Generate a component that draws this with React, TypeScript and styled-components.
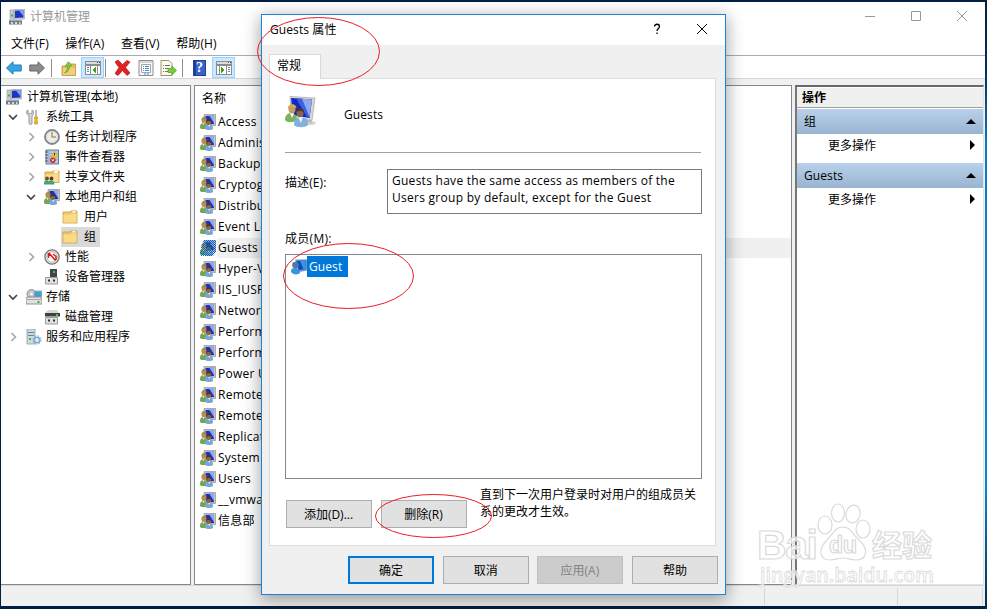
import React from 'react';
import styled, { createGlobalStyle, css } from 'styled-components';

const GlobalStyle = createGlobalStyle`
   html, body {
      margin: 0;
      height: 100%;
      overflow: hidden;
   }

   * {
      box-sizing: border-box;
   }
`;

const Desktop = styled.div`
   position: relative;
   width: 987px;
   height: 609px;
   padding: 2px 2px 3px 1px;
   background: linear-gradient(180deg, #021f43 0%, #02305f 12%, #0a7cc4 24%, #0b86cf 80%, #01284d 100%) right / 2px 100%
         no-repeat,
      #011f42;
   font-family: 'Open Sans', 'Noto Sans CJK SC', sans-serif;
   font-size: 12px;
   color: #000;
   overflow: hidden;
   white-space: nowrap;
`;

/* Main window */

const Window = styled.div`
   display: flex;
   flex-direction: column;
   width: 984px;
   height: 604px;
   background: #f0f0f0;
`;

const TitleBar = styled.div`
   display: flex;
   align-items: center;
   height: 30px;
   padding-left: 8px;
   background: #fff;
   color: #999;
`;

const TitleText = styled.span`
   flex: 1;
   margin-left: 5px;
   line-height: 29px;
   height: 30px;
`;

const CaptionButtons = styled.div`
   display: flex;
   gap: 34px;
   padding-right: 17px;
   margin-top: -2px;
`;

const MenuBar = styled.div`
   display: flex;
   gap: 16.5px;
   height: 24px;
   padding: 1px 0 0 10px;
   background: #fff;
   border-bottom: 1px solid #a9acb2;
   line-height: 22px;
   letter-spacing: 0.1px;
`;

const Toolbar = styled.div`
   display: flex;
   align-items: center;
   height: 23px;
   padding: 1px 0 0 4px;
   background: #fff;
   border-bottom: 1px solid #d7d7d7;
`;

const ToolButton = styled.span<{ $active?: boolean; $gap?: number }>`
   display: flex;
   align-items: center;
   justify-content: center;
   width: 23px;
   height: 21px;
   margin-left: ${({ $gap }) => $gap ?? 0}px;

   ${({ $active }) =>
      $active &&
      css`
         background: #cce8ff;
         border: 1px solid #99d1ff;
      `}
`;

const ToolSeparator = styled.span<{ $gap: number }>`
   width: 1px;
   height: 18px;
   margin-left: ${({ $gap }) => $gap}px;
   background: #8d8d8d;
`;

const Panes = styled.div`
   display: flex;
   flex: 1;
   padding-top: 6px;
`;

const Pane = styled.div<{ $width: number; $gap?: number }>`
   width: ${({ $width }) => $width}px;
   margin-right: ${({ $gap }) => $gap ?? 0}px;
   background: #fff;
   border: 1px solid #828790;
`;

const TreePane = styled(Pane)`
   padding-top: 1px;
   border-left: 0;
`;

const TreeRow = styled.div<{ $level: number }>`
   display: flex;
   align-items: center;
   height: 20px;
   padding-left: ${({ $level }) => [4, 7, 25, 43][$level]}px;
`;

const Expander = styled.span`
   display: flex;
   align-items: center;
   width: 17px;
`;

const TreeItem = styled.span<{ $selected?: boolean; $gap: number }>`
   display: flex;
   align-items: center;
   height: 20px;
   line-height: 20px;
   padding: 0 4px 0 1px;
   gap: ${({ $gap }) => $gap}px;
   background: ${({ $selected }) => ($selected ? '#d9d9d9' : 'transparent')};
`;

const ListHeader = styled.div`
   height: 25px;
   padding-left: 7px;
   line-height: 25px;
`;

const GroupRow = styled.div<{ $selected?: boolean }>`
   display: flex;
   align-items: center;
   height: 21px;
   margin-left: 5px;
   gap: 1px;

   > span {
      flex: 1;
      height: 20px;
      padding-left: 1px;
      line-height: 20px;
      letter-spacing: 0.25px;
      background: ${({ $selected }) => ($selected ? '#f0f0f0' : 'transparent')};
   }
`;

const ActionPane = styled.div`
   flex: 1;
   margin-right: 1px;
   padding-top: 1px;
   background: #fff;
   border: 2px solid #696969;
   border-left-color: #777;
   border-right: 1px solid #e3e3e3;
   border-bottom: 1px solid #e3e3e3;
`;

const ActionTitle = styled.div`
   height: 20px;
   padding-left: 5px;
   background: #f0f0f0;
   border-bottom: 1px solid #a0a0a0;
   font-weight: bold;
   line-height: 20px;
`;

const ActionSection = styled.div`
   display: flex;
   align-items: center;
   justify-content: space-between;
   height: 25px;
   margin-top: 1px;
   padding: 0 7px;
   background: linear-gradient(#b9d1ea, #99b4d1);
   line-height: 22px;
   letter-spacing: 0.1px;
`;

const ActionItem = styled.div`
   display: flex;
   align-items: center;
   justify-content: space-between;
   height: 28px;
   padding: 0 8px 6px 31px;
`;

const StatusBar = styled.div`
   display: flex;
   height: 21px;
   padding: 2px 2px 1px 0;
   border-top: 1px solid #d7d7d7;
`;

const StatusCell = styled.span<{ $width: number }>`
   width: ${({ $width }) => $width}px;
   border-right: 1px solid #d7d7d7;
`;

/* Dialog */

const Dialog = styled.div`
   position: absolute;
   left: 261px;
   top: 14px;
   display: flex;
   flex-direction: column;
   width: 465px;
   height: 581px;
   background: #f0f0f0;
   border: 1px solid #1883d7;
   box-shadow: 0 4px 16px 1px rgba(0, 0, 0, 0.36);
`;

const DialogTitle = styled.div`
   display: flex;
   align-items: center;
   height: 30px;
   padding: 0 17px 2px 8px;
   background: #fff;

   > span {
      flex: 1;
      letter-spacing: 0.1px;
   }

   > svg {
      margin-left: 34px;
   }
`;

const Tabs = styled.div`
   display: flex;
   height: 34px;
   padding: 9px 0 0 7px;
`;

const Tab = styled.div`
   position: relative;
   z-index: 1;
   width: 52px;
   height: 25px;
   padding-left: 7px;
   background: #fff;
   border: 1px solid #d9d9d9;
   border-bottom: 0;
   line-height: 22px;
`;

const TabPage = styled.div`
   width: 447px;
   height: 468px;
   margin: -1px 0 0 7px;
   padding: 17px 13px 0 15px;
   background: #fff;
   border: 1px solid #dcdcdc;
`;

const GroupSummary = styled.div`
   display: flex;
   align-items: center;
   width: 416px;
   height: 57px;
   padding-bottom: 24px;
   border-bottom: 1px solid #a0a0a0;
   gap: 27px;
   letter-spacing: 0.1px;

   > span {
      padding-top: 5px;
   }
`;

const Field = styled.div`
   display: flex;
   align-items: flex-start;
   justify-content: space-between;
   width: 417px;
   margin-top: 16px;
`;

const Label = styled.span`
   margin-top: 5px;
   line-height: 17px;
   letter-spacing: 0.1px;
`;

const Description = styled.div`
   width: 315px;
   height: 45px;
   padding: 2px 4px;
   border: 1px solid #7a7a7a;
   line-height: 17px;
   letter-spacing: 0.27px;
   white-space: pre;
`;

const MembersLabel = styled.div`
   height: 40px;
   padding-top: 16px;
   line-height: 17px;
   letter-spacing: 0.3px;
`;

const MemberList = styled.div`
   width: 417px;
   height: 225px;
   padding: 1px 5px;
   border: 1px solid #828790;
`;

const Member = styled.div`
   display: flex;
   align-items: center;
   height: 21px;

   > span {
      width: 41px;
      height: 21px;
      padding-left: 2px;
      background: #0078d7;
      color: #fff;
      line-height: 21px;
      letter-spacing: 0.1px;
   }
`;

const MemberActions = styled.div`
   display: flex;
   margin: 7px 0 0 1px;
   gap: 9px;
`;

const Note = styled.div`
   margin-left: 4px;
   line-height: 17px;
`;

const Button = styled.button<{ $primary?: boolean }>`
   width: 86px;
   height: 28px;
   padding: 0 0 1px;
   border: ${({ $primary }) => ($primary ? '2px solid #0078d7' : '1px solid #adadad')};
   background: #e1e1e1;
   color: #000;
   font: inherit;

   ${MemberActions} & {
      margin-top: 14px;
      padding-right: 1px;
   }

   &:disabled {
      padding-right: 1px;
      background: #ccc;
      border-color: #bfbfbf;
      color: #838383;
   }
`;

const DialogFooter = styled.div`
   display: flex;
   justify-content: flex-end;
   gap: 8.67px;
   padding: 10px 7px 0 0;
`;

const Overlay = styled.svg`
   position: absolute;
   z-index: 2;
   left: 0;
   top: 0;
   pointer-events: none;
`;

/* Icons */

const ComputerIcon = () => (
   <svg width="16" height="16" viewBox="0 0 16 16">
      <path d="M5 .5L15.500 0v10L5 10.500z" fill="#c9ccd0" stroke="#9a9ea3" strokeWidth=".6" />
      <path d="M6 1.800l8.500-.5v7.200L6 9z" fill="#1b35c4" />
      <path d="M10 1.500l4.500-.2v6z" fill="#7ea9f5" />
      <path d="M1 1h3.800v9.500H1z" fill="#c7cbd0" stroke="#8b9096" strokeWidth=".6" />
      <path d="M2 5.500h2v2H2z" fill="#38b72c" />
      <path d="M0 11h13v4.500H0z" fill="#6e7d88" />
      <path d="M0 10.500h13v1H0zM2 13h2v2H2zM6 13h2v2H6zM10 13h1.500v2H10z" fill="#d4dade" />
   </svg>
);

const GroupIcon = ({ tint }: { tint?: string }) => (
   <svg width="16" height="16" viewBox="0 0 16 16">
      <path d="M4 .5L15.500.3v11.200L8 12H4z" fill="#c4c4bf" stroke="#8f938f" strokeWidth=".7" />
      <path d="M5.500 2l8.500-.3V10l-7 .5-1.500-3z" fill="#1733cf" />
      <path d="M9.500 1.900l4.500-.2V9z" fill="#8ea9f2" />
      <path d="M0 13.500C0 10 1.500 9 3.500 9S7 10 7 13.500L6 15H1z" fill="#6fa753" />
      <path d="M2.500 9h2l-1 2z" fill="#fff" />
      <ellipse cx="4" cy="6.300" rx="2.500" ry="3" fill="#b98e58" />
      <path d="M1.500 6C1.500 2 6.500 2 6.500 6 5 4.500 3.500 4.500 1.500 6z" fill="#a98842" />
      <path d="M5 15c0-4 2-4.500 4-4.500s4 .5 4 4.500c-2 1.300-6 1.300-8 0z" fill="#79a6d3" />
      <path d="M8 10.500h2.500L9.300 13z" fill="#f2f7fc" />
      <ellipse cx="8.700" cy="8" rx="2.400" ry="2.900" fill="#8e6542" />
      <path d="M6.200 8c-.5-4.500 5.300-4.500 5 0-1.500-1.500-3.500-1.500-5 0z" fill="#463429" />
      {tint && (
         <>
            <defs>
               <pattern id="dither" width="2" height="2" patternUnits="userSpaceOnUse">
                  <path d="M0 0h1v1H0zM1 1h1v1H1z" fill={tint} shapeRendering="crispEdges" />
               </pattern>
            </defs>
            <path d="M4 0h12v12l-3 4H1l-1-4 2-8z" fill="url(#dither)" />
         </>
      )}
   </svg>
);

const LargeGroupIcon = () => (
   <svg width="32" height="32" viewBox="0 0 32 32">
      <ellipse cx="25" cy="27" rx="6" ry="2" fill="#d3d5d6" />
      <path d="M21 22l5 1 1 4-6-1z" fill="#b8bab9" />
      <path d="M5 .5l25 1.500-3 22.500L7 22z" fill="#d7d7d4" stroke="#aeb1af" strokeWidth=".8" />
      <path d="M6 2l21 1.500L24.500 22 8 19z" fill="#1228be" />
      <path d="M11 2.300l16 1.200L24.500 22l-2-.2z" fill="#3e62df" />
      <path d="M17 2.800l10 .7L24.500 21z" fill="#8ea9ef" />
      <path d="M0 24c0-5 3-7 6-7s6 2 6 7c-3 3-10 3-12 0z" fill="#7db35d" />
      <path d="M5 17h4l-2 5z" fill="#fff" />
      <ellipse cx="7" cy="13" rx="3.500" ry="4.600" fill="#c79a68" />
      <path d="M3 13c-1-6 8.500-6.500 8.500-1-3-.5-5-2-7 0z" fill="#cdb04c" />
      <path d="M9 29c0-6 3-8 7-8s7 2 7 8c-3 3-11 3-14 0z" fill="#80b1de" />
      <path d="M13 21h5l-2 6z" fill="#edf5fc" />
      <ellipse cx="15" cy="17" rx="3.500" ry="4.300" fill="#906442" />
      <path d="M11 16c0-5.500 8-5.500 8 0-3-1.500-5-1.500-8 0z" fill="#49372d" />
   </svg>
);

const UserIcon = () => (
   <svg width="16" height="16" viewBox="0 0 16 16">
      <path d="M4 .5h12v11L8 13z" fill="#6697c7" />
      <path d="M5.500 2L14.500 1.500v8.500l-7 1z" fill="#0a4cc4" />
      <path d="M9 1.800l5.500-.3v8.500l-2 .3z" fill="#4291df" />
      <circle cx="4.500" cy="6" r="3.300" fill="#4b7aa8" />
      <path d="M0 13c0-4 2-4 4-4 3 0 5 2 5 5-2 2-7 2-9-1z" fill="#3b93dc" />
   </svg>
);

const ToolsIcon = () => (
   <svg width="16" height="16" viewBox="0 0 16 16">
      <path
         d="M2 1v3l2 1 2-1V1c2 1 2 4 0 6v7c0 2-3 2-3 0V7C0 5 0 2 2 1z"
         fill="#d8d8d8"
         stroke="#818181"
         strokeWidth=".8"
      />
      <path d="M9.500 1h1v7h-1z" fill="#777" />
      <path d="M8.500 8h3v2l-1 1 1 1v3h-3v-3l1-1-1-1z" fill="#f5b321" stroke="#ca850d" strokeWidth=".6" />
   </svg>
);

const ClockIcon = () => (
   <svg width="16" height="16" viewBox="0 0 16 16">
      <circle cx="8" cy="8" r="7" fill="#e9edf4" stroke="#858585" strokeWidth="1.800" />
      <circle cx="8" cy="8" r="5.500" fill="none" stroke="#d5d9df" />
      <path d="M8 3v5h4" fill="none" stroke="#c29745" strokeWidth="1.500" />
   </svg>
);

const EventIcon = () => (
   <svg width="16" height="16" viewBox="0 0 16 16">
      <path d="M2 1h12.500v14H2z" fill="#b5c9e3" stroke="#41618d" strokeWidth=".8" />
      <path d="M4.500 2h.8v12h-.8zM6 4h8v.6H6zM6 7h8v.6H6zM6 10h8v.6H6z" fill="#7f9fc8" />
      <path d="M1 3h3M1 6h3M1 9h3M1 12h3" stroke="#444" strokeWidth=".8" />
      <path d="M10.500 2l3.500 6H7z" fill="#ffd21e" stroke="#c79a10" strokeWidth=".5" />
      <path d="M10.500 4v2.500" stroke="#222" />
      <circle cx="8.800" cy="11.300" r="2.800" fill="#d8272f" />
      <path d="M7.800 10.300l2 2m0-2l-2 2" stroke="#fff" />
   </svg>
);

const FolderIcon = () => (
   <svg width="16" height="16" viewBox="0 0 16 16">
      <path d="M1 3h7l1-1h6v12H1z" fill="#efc865" stroke="#c99d45" strokeWidth=".8" />
      <path d="M10 1.800h4v2h-4z" fill="#fff" stroke="#c8b274" strokeWidth=".5" />
      <path d="M1.500 5.500H9l1-1h4.500v9h-13z" fill="#fada85" />
   </svg>
);

const SharedFolderIcon = () => (
   <svg width="16" height="16" viewBox="0 0 16 16">
      <path d="M1 3h7l1-1h6v11.500H1z" fill="#f0c65e" stroke="#c99d45" strokeWidth=".8" />
      <path d="M10 1.800h4v2h-4z" fill="#fff" />
      <path d="M1.500 5.500H9l1-1h4.500V13h-13z" fill="#fbdc8c" />
      <path d="M0 15.500c0-4 2-4 3-4s3 1 3 4zM4.500 15.500c0-4 1.500-4 3-4s3 1 3 4z" fill="#3fa287" />
      <circle cx="3" cy="9.500" r="1.900" fill="#6b5137" />
      <circle cx="7.500" cy="9.500" r="1.900" fill="#57402f" />
   </svg>
);

const PerformanceIcon = () => (
   <svg width="16" height="16" viewBox="0 0 16 16">
      <circle cx="8" cy="8" r="7.100" fill="#fff" stroke="#777" strokeWidth="1.300" />
      <circle cx="8" cy="8" r="5.300" fill="none" stroke="#b6aaa6" />
      <path d="M4.500 9V5L7 6.500M5 4l6.500 7.500M9 5l3 2.500V11" fill="none" stroke="#d61a1a" strokeWidth="1.500" />
   </svg>
);

const DeviceIcon = ({ disk }: { disk?: boolean }) => (
   <svg width="16" height="16" viewBox="0 0 16 16">
      {disk ? (
         <>
            <path d="M2 3l2-2h9l2 3v1H2z" fill="#d6d6d6" />
            <path d="M1 4h15v3.500H1z" fill="#3d403e" />
         </>
      ) : (
         <path d="M6 0h7v11H6z" fill="#42464a" />
      )}
      <path d={disk ? 'M12 5h2v2h-2z' : 'M9 2h2v2H9z'} fill="#40cf32" />
      <path d="M1.500 8.500h12v6.500h-12z" fill="#e0e0e0" stroke="#9c9c9c" />
      <path d="M4 10.500h2v2H4zM9 10.500h2v2H9z" fill="#333" />
   </svg>
);

const StorageIcon = () => (
   <svg width="16" height="16" viewBox="0 0 16 16">
      <circle cx="5.500" cy="5" r="4.500" fill="#c5c8c9" stroke="#8c9294" />
      <circle cx="5.500" cy="5" r="1.300" fill="#fff" />
      <path d="M8 2h8v6H8z" fill="#3ea0da" stroke="#a7b2b8" />
      <path d="M0 9l1-1h13l2 2v5H0z" fill="#e2e2e2" stroke="#7c7c7c" strokeWidth=".8" />
      <path d="M.5 10h15v1H.5z" fill="#aaa" />
      <path d="M11.500 12h2v2h-2z" fill="#38b72c" />
   </svg>
);

const ServicesIcon = () => (
   <svg width="16" height="16" viewBox="0 0 16 16">
      <path d="M1 0h8v15H1z" fill="#ccd9df" stroke="#8e9aa0" strokeWidth=".8" />
      <path d="M2 3h6v1H2zM2 6h6v1H2z" fill="#70828c" />
      <path d="M3 9h2v2H3z" fill="#41b82f" />
      <circle cx="11" cy="11" r="2.800" fill="#dceaf7" stroke="#7fa9cf" strokeWidth="1.600" />
      <circle cx="11" cy="11" r="4.200" fill="none" stroke="#7fa9cf" strokeDasharray="1.650 1.650" />
   </svg>
);

const Chevron = ({ open }: { open?: boolean }) => (
   <svg width="10" height="10" viewBox="0 0 10 10">
      <path
         d={open ? 'M1 3l4 4 4-4' : 'M3.500 1l4 4-4 4'}
         fill="none"
         stroke={open ? '#404040' : '#a6a6a6'}
         strokeWidth="1.600"
      />
   </svg>
);

const ArrowIcon = ({ forward }: { forward?: boolean }) => (
   <svg width="16" height="14" viewBox="0 0 16 14">
      <path
         d={forward ? 'M15.500 7L9 .8V4H.8v6H9v3.200z' : 'M.5 7L7 .8V4h8.200v6H7v3.200z'}
         fill={forward ? '#8c8c8c' : '#35a5e6'}
         stroke={forward ? '#666' : '#2178b0'}
      />
   </svg>
);

const UpFolderIcon = () => (
   <svg width="16" height="16" viewBox="0 0 16 16">
      <path d="M1 6h5l1-2h7.500v11.500H1z" fill="#e8bd5c" stroke="#b99145" strokeWidth=".8" />
      <path d="M2 8h12v7H2z" fill="#f3cf7a" />
      <path d="M3.500 13c4-1 5-4 5-7H11L7.500 1.500 4 6h2.500c0 3-1 5-3 7z" fill="#7ac943" stroke="#4b9c25" strokeWidth=".5" />
   </svg>
);

const WindowPaneIcon = ({ right }: { right?: boolean }) => (
   <svg width="16" height="14" viewBox="0 0 16 14" shapeRendering="crispEdges">
      <path d="M0 0h16v14H0z" fill="#8a8d90" />
      <path d="M1 1h14v2H1z" fill="#d8dde2" />
      <path d="M12 1h1v1h-1zM14 1h1v1h-1z" fill="#555" />
      <path d={right ? 'M1 5h2v8H1zM4 5h6v8H4zM11 5h4v8h-4z' : 'M1 5h4v8H1zM6 5h6v8H6zM13 5h2v8h-2z'} fill="#fff" />
      <path d={right ? 'M12 6h2v1h-2zM12 8h2v1h-2zM12 10h2v1h-2z' : 'M2 6h2v1H2zM2 8h2v1H2zM2 10h2v1H2z'} fill="#5a84b0" />
      <path d={right ? 'M5 6l4 3-4 3z' : 'M11 6L7 9l4 3z'} fill="#3ca321" />
   </svg>
);

const DeleteIcon = () => (
   <svg width="17" height="16" viewBox="0 0 17 16">
      <path
         d="M1 2l3-2 4.500 4.500L13 .5 16 2l-4.500 5.500L16 13l-3 2.500-4.500-5L4 15.500 1 13.500l4-6z"
         fill="#df2222"
         stroke="#b11818"
         strokeWidth=".7"
      />
   </svg>
);

const PropertiesIcon = () => (
   <svg width="16" height="16" viewBox="0 0 16 16">
      <path d="M1 .5h14v15H1z" fill="#f7f7f7" stroke="#8c8c8c" />
      <path d="M1.500 2h13" stroke="#b5b5b5" />
      <path d="M3.500 4.500h9v8h-9z" fill="#fff" stroke="#a5a5a5" />
      <path d="M5 6.500h1M7 6.500h4M5 8.500h1M7 8.500h4M5 10.500h1M7 10.500h4M6 14h2M9 14h2" stroke="#4289bd" />
   </svg>
);

const ExportIcon = () => (
   <svg width="17" height="16" viewBox="0 0 17 16">
      <path d="M1 .5h8l3 3v12H1z" fill="#fffbe9" stroke="#9b927a" />
      <path d="M3 5.500h1M5 5.500h5M3 8.500h1M5 8.500h4M3 11.500h1M5 11.500h4" stroke="#6d7380" />
      <path d="M8 8.500h4V6l4.500 4.500L12 15v-2.500H8z" fill="#77cf3f" stroke="#4ba524" strokeWidth=".7" />
   </svg>
);

const HelpGlyph = styled.span`
   width: 13px;
   height: 16px;
   background: linear-gradient(90deg, #1e3c99 2px, #3a62ce 2px);
   border: 1px solid #24418f;
   color: #fff;
   font: bold 14px/14px 'Liberation Serif', serif;
   text-align: center;
`;

type TreeNode = { label: string; level: number; icon: React.ReactNode; open?: boolean; selected?: boolean };

const tree: TreeNode[] = [
   { label: '计算机管理(本地)', level: 0, icon: <ComputerIcon /> },
   { label: '系统工具', level: 1, icon: <ToolsIcon />, open: true },
   { label: '任务计划程序', level: 2, icon: <ClockIcon />, open: false },
   { label: '事件查看器', level: 2, icon: <EventIcon />, open: false },
   { label: '共享文件夹', level: 2, icon: <SharedFolderIcon />, open: false },
   { label: '本地用户和组', level: 2, icon: <GroupIcon />, open: true },
   { label: '用户', level: 3, icon: <FolderIcon /> },
   { label: '组', level: 3, icon: <FolderIcon />, selected: true },
   { label: '性能', level: 2, icon: <PerformanceIcon />, open: false },
   { label: '设备管理器', level: 2, icon: <DeviceIcon /> },
   { label: '存储', level: 1, icon: <StorageIcon />, open: true },
   { label: '磁盘管理', level: 2, icon: <DeviceIcon disk /> },
   { label: '服务和应用程序', level: 1, icon: <ServicesIcon />, open: false },
];

const iconGaps = [5, 4, 5, 6];

const groups = [
   'Access',
   'Administrators',
   'Backup Operators',
   'Cryptographic',
   'Distributed COM',
   'Event Log Readers',
   'Guests',
   'Hyper-V',
   'IIS_IUSRS',
   'Network',
   'Performance',
   'Performance',
   'Power Users',
   'Remote Desktop',
   'Remote',
   'Replicator',
   'System',
   'Users',
   '__vmware__',
   '信息部',
];

function CaptionIcon({ path, color = '#999' }: { path: string; color?: string }) {
   return (
      <svg width="12" height="12" viewBox="0 0 12 12">
         <path d={path} fill="none" stroke={color} />
      </svg>
   );
}

const closePath = 'M1 1l10 10M11 1L1 11';

function ActionGroup({ name }: { name: string }) {
   return (
      <>
         <ActionSection>
            {name}
            <svg width="10" height="5">
               <path d="M0 5l5-5 5 5z" />
            </svg>
         </ActionSection>
         <ActionItem>
            更多操作
            <svg width="5" height="10">
               <path d="M0 0l5 5-5 5z" />
            </svg>
         </ActionItem>
      </>
   );
}

function MainWindow() {
   return (
      <Window>
         <TitleBar>
            <ComputerIcon />
            <TitleText>计算机管理</TitleText>
            <CaptionButtons>
               <CaptionIcon path="M1 6.500h10" />
               <CaptionIcon path="M1.500 1.500h9v9h-9z" />
               <CaptionIcon path={closePath} />
            </CaptionButtons>
         </TitleBar>
         <MenuBar>
            <span>文件(F)</span>
            <span>操作(A)</span>
            <span>查看(V)</span>
            <span>帮助(H)</span>
         </MenuBar>
         <Toolbar>
            <ToolButton $gap={-3}>
               <ArrowIcon />
            </ToolButton>
            <ToolButton>
               <ArrowIcon forward />
            </ToolButton>
            <ToolSeparator $gap={3} />
            <ToolButton $gap={5}>
               <UpFolderIcon />
            </ToolButton>
            <ToolButton $active $gap={1}>
               <WindowPaneIcon />
            </ToolButton>
            <ToolSeparator $gap={1} />
            <ToolButton $gap={5}>
               <DeleteIcon />
            </ToolButton>
            <ToolButton>
               <PropertiesIcon />
            </ToolButton>
            <ToolButton>
               <ExportIcon />
            </ToolButton>
            <ToolSeparator $gap={2} />
            <ToolButton $gap={5}>
               <HelpGlyph>?</HelpGlyph>
            </ToolButton>
            <ToolButton $active $gap={1}>
               <WindowPaneIcon right />
            </ToolButton>
         </Toolbar>
         <Panes>
            <TreePane $width={190} $gap={3}>
               {tree.map(({ label, level, icon, open, selected }) => (
                  <TreeRow key={label} $level={level}>
                     {level > 0 && <Expander>{open !== undefined && <Chevron open={open} />}</Expander>}
                     <TreeItem $selected={selected} $gap={iconGaps[level]}>
                        {icon}
                        {label}
                     </TreeItem>
                  </TreeRow>
               ))}
            </TreePane>
            <Pane $width={598} $gap={3}>
               <ListHeader>名称</ListHeader>
               {groups.map((name, i) => (
                  <GroupRow key={i} $selected={name === 'Guests'}>
                     <GroupIcon tint={name === 'Guests' ? '#0b67b8' : undefined} />
                     <span>{name}</span>
                  </GroupRow>
               ))}
            </Pane>
            <ActionPane>
               <ActionTitle>操作</ActionTitle>
               <ActionGroup name="组" />
               <ActionGroup name="Guests" />
            </ActionPane>
         </Panes>
         <StatusBar>
            <StatusCell $width={764} />
            <StatusCell $width={133} />
            <StatusCell $width={85} />
         </StatusBar>
      </Window>
   );
}

function PropertiesDialog() {
   return (
      <Dialog>
         <DialogTitle>
            <span>Guests 属性</span>
            <svg width="10" height="12" viewBox="0 0 10 12">
               <path d="M2.500 3.500c0-3 5-3 5 0 0 2-2.500 2-2.500 4.500M5 9.500v1.500" fill="none" stroke="#000" strokeWidth="1.300" />
            </svg>
            <CaptionIcon path={closePath} color="#000" />
         </DialogTitle>
         <Tabs>
            <Tab>常规</Tab>
         </Tabs>
         <TabPage>
            <GroupSummary>
               <LargeGroupIcon />
               <span>Guests</span>
            </GroupSummary>
            <Field>
               <Label>描述(E):</Label>
               <Description>
                  {'Guests have the same access as members of the\nUsers group by default, except for the Guest'}
               </Description>
            </Field>
            <MembersLabel>成员(M):</MembersLabel>
            <MemberList>
               <Member>
                  <UserIcon />
                  <span>Guest</span>
               </Member>
            </MemberList>
            <MemberActions>
               <Button>添加(D)...</Button>
               <Button>删除(R)</Button>
               <Note>
                  直到下一次用户登录时对用户的组成员关
                  <br />
                  系的更改才生效。
               </Note>
            </MemberActions>
         </TabPage>
         <DialogFooter>
            <Button $primary>确定</Button>
            <Button>取消</Button>
            <Button disabled>应用(A)</Button>
            <Button>帮助</Button>
         </DialogFooter>
      </Dialog>
   );
}

function Watermark() {
   return (
      <g
         fill="#fff"
         fillOpacity=".7"
         stroke="#dadada"
         strokeWidth="1.200"
         fontFamily="'Liberation Sans', 'Noto Sans CJK SC', sans-serif"
         fontWeight="bold"
      >
         <text x="757" y="559" fontSize="41" textLength="61">
            Bai
         </text>
         <ellipse cx="825" cy="525" rx="7" ry="9" />
         <ellipse cx="838" cy="513" rx="6.500" ry="9" />
         <ellipse cx="853" cy="514" rx="7" ry="9" transform="rotate(12 853 514)" />
         <ellipse cx="863" cy="529" rx="7" ry="9" />
         <path d="M843 527c8 0 9 7 16 13 11 10 7 20-3 20-6 0-8-2-13-2s-7 2-13 2c-10 0-13-10-3-20 6-6 8-13 16-13z" />
         <text x="829" y="553" fontSize="23" textLength="28">
            du
         </text>
         <text x="872" y="556" fontSize="30" textLength="60">
            经验
         </text>
         <text
            x="760"
            y="582"
            fontSize="20"
            fontWeight="600"
            fontFamily="'Open Sans', sans-serif"
            strokeWidth=".8"
            textLength="174"
            lengthAdjust="spacingAndGlyphs"
         >
            jingyan.baidu.com
         </text>
      </g>
   );
}

export default function App() {
   return (
      <Desktop>
         <GlobalStyle />
         <MainWindow />
         <PropertiesDialog />
         <Overlay width="987" height="609">
            <Watermark />
            <g fill="none" stroke="#ed1c24">
               <ellipse cx="318.500" cy="51.500" rx="61" ry="34" />
               <ellipse cx="348.500" cy="276" rx="65" ry="32.500" />
               <ellipse cx="433.500" cy="516" rx="58" ry="21.500" />
            </g>
         </Overlay>
      </Desktop>
   );
}
